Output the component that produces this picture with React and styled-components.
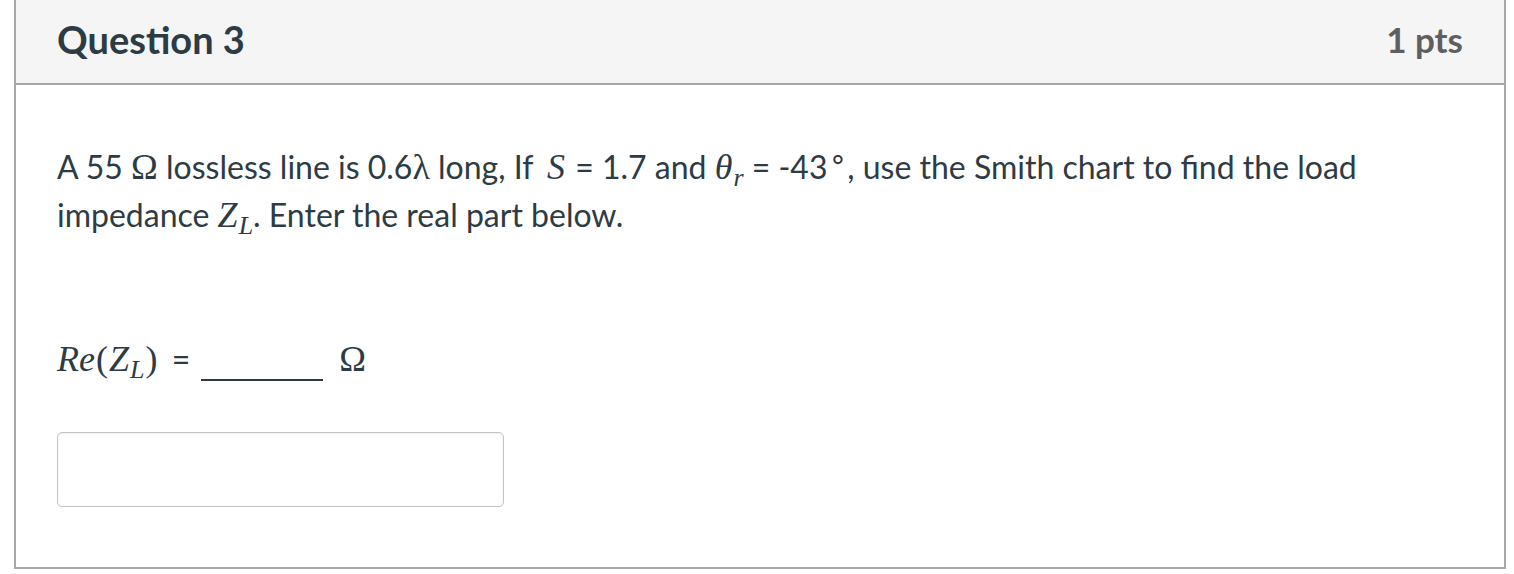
import React from "react";
import styled, { createGlobalStyle } from "styled-components";

const Global = createGlobalStyle`
  html, body { margin: 0; padding: 0; background: #fff; }
  body { font-family: Lato, "Open Sans", sans-serif; color: #2d3b45; }
`;

const Card = styled.div`
  box-sizing: border-box;
  margin-left: 14px;
  width: 1492px;
  border: 2px solid #a8a8a8;
  border-top: none;
  background: #fff;
`;

const Header = styled.div`
  box-sizing: border-box;
  height: 85px;
  padding: 0 41px 5px 41px;
  background: #f5f5f5;
  border-bottom: 2px solid #a8a8a8;
  display: flex;
  align-items: center;
  justify-content: space-between;
`;

const Title = styled.h2`
  margin: 0;
  font-family: Lato, sans-serif;
  font-weight: 700;
  font-size: 38px;
  color: #2d3b45;
`;

const Points = styled.div`
  font-family: Lato, sans-serif;
  font-weight: 700;
  font-size: 35px;
  color: #5f5f5f;
`;

const Body = styled.div`
  padding: 58px 41px 60px 41px;
`;

const Para = styled.p`
  margin: 0 0 ${(p) => p.$after || 0}px 0;
  font-family: Lato, sans-serif;
  font-size: 32px;
  line-height: 48px;
  color: #2d3b45;
`;

const M = styled.span`
  font-family: "Liberation Serif", "DejaVu Serif", serif;
  font-style: ${(p) => (p.$upright ? "normal" : "italic")};
  font-size: 36px;
  margin-left: ${(p) => p.$left || 0}px;
  margin-right: ${(p) => p.$right || 0}px;
`;

const Sub = styled.sub`
  font-family: "Liberation Serif", "DejaVu Serif", serif;
  font-style: italic;
  font-size: 26px;
  line-height: 0;
  vertical-align: -7px;
  margin-left: 1px;
`;

const Sup = styled.sup`
  font-family: "DejaVu Sans", sans-serif;
  font-size: 30px;
  line-height: 0;
  vertical-align: 10px;
  margin-left: 1px;
`;

const Blank = styled.span`
  display: inline-block;
  width: 122px;
  border-bottom: 2px solid #2d3b45;
  vertical-align: -10px;
  margin: 0 16px 0 11px;
`;

const Input = styled.input`
  display: block;
  box-sizing: border-box;
  width: 447px;
  height: 75px;
  border: 1px solid #c4c4c4;
  border-radius: 5px;
  box-shadow: inset 0 1px 2px rgba(0, 0, 0, 0.08);
  background: #fff;
  outline: none;
  font-size: 24px;
  padding: 0 12px;
`;

export default function App() {
  return (
    <>
      <Global />
      <Card>
        <Header>
          <Title>Question 3</Title>
          <Points>1 pts</Points>
        </Header>
        <Body>
          <Para $after={96}>
            A 55 <M $upright>Ω</M> lossless line is 0.6<M $upright>λ</M> long, If{" "}
            <M $left={6} $right={2}>S</M> = 1.7 and <M>θ</M>
            <Sub>r</Sub> = -43<Sup>∘</Sup>, use the Smith chart to find the load
            impedance <M>Z</M>
            <Sub>L</Sub>. Enter the real part below.
          </Para>
          <Para $after={49}>
            <M $right={1}>Re</M>
            <M $upright $right={1}>(</M>
            <M>Z</M>
            <Sub>L</Sub>
            <M $upright $left={1} $right={6}>)</M> =<Blank />
            <M $upright>Ω</M>
          </Para>
          <Input type="text" aria-label="Re(Z_L)" />
        </Body>
      </Card>
    </>
  );
}
